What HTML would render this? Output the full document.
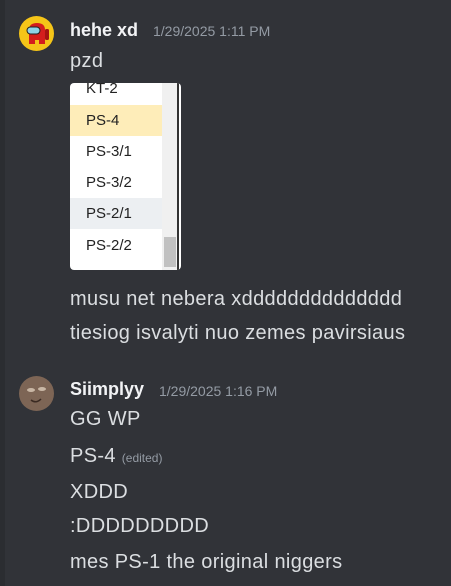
<!DOCTYPE html>
<html><head><style>
body{margin:0;width:451px;height:586px;background:#313338;font-family:"Liberation Sans",sans-serif;color:#dbdee1;position:relative;overflow:hidden}
.a{position:absolute;white-space:nowrap}
.t{font-size:20px;letter-spacing:0.35px;color:#dbdee1}
.n{font-size:18px;font-weight:bold;color:#f2f3f5}
.d{font-size:14px;color:#949ba4}
.img{position:absolute;left:70px;top:83px;width:111px;height:187px;background:#fff;border-radius:4px;overflow:hidden}
.row{position:absolute;left:0;width:92px;height:31px;font-size:15px;color:#222;line-height:31px;padding-left:16px;box-sizing:border-box}
</style></head><body>
<div class="a" style="left:0;top:0;width:5px;height:586px;background:#2b2d31"></div>
<svg class="a" style="left:19px;top:16px" width="35" height="35" viewBox="0 0 35 35">
<circle cx="17.5" cy="17.5" r="17.5" fill="#f5c518"/>
<path d="M10 28 V14 Q10 7 18 7 Q26 7 26 14 V28 H20 V24 H16 V28Z" fill="#d41d1d"/>
<rect x="26" y="13" width="4" height="11" rx="1.5" fill="#a51212"/>
<rect x="8" y="11" width="13" height="7" rx="3.5" fill="#8ed3e8" stroke="#222" stroke-width="1"/>
</svg>
<div class="a n" style="left:70px;top:20px">hehe xd</div>
<div class="a d" style="left:153px;top:23px">1/29/2025 1:11 PM</div>
<div class="a t" style="left:70px;top:50px">pzd</div>
<div class="img">
<div class="row" style="top:-10px">KT-2</div>
<div class="row" style="top:22px;background:#feedb9">PS-4</div>
<div class="row" style="top:53px">PS-3/1</div>
<div class="row" style="top:84px">PS-3/2</div>
<div class="row" style="top:115px;background:#eceff2">PS-2/1</div>
<div class="row" style="top:147px">PS-2/2</div>
<div class="a" style="left:92px;top:0;width:15px;height:187px;background:#f0f0f0"></div>
<div class="a" style="left:94px;top:154px;width:12px;height:30px;background:#c1c1c1"></div>
<div class="a" style="left:107px;top:0;width:2px;height:187px;background:#333"></div>
</div>
<div class="a t" style="left:70px;top:288px">musu net nebera xdddddddddddddd</div>
<div class="a t" style="left:70px;top:322px">tiesiog isvalyti nuo zemes pavirsiaus</div>
<svg class="a" style="left:19px;top:376px" width="35" height="35" viewBox="0 0 35 35">
<circle cx="17.5" cy="17.5" r="17.5" fill="#7d6555"/>
<ellipse cx="12" cy="14" rx="4" ry="2" fill="#c9b7a5"/>
<ellipse cx="23" cy="13" rx="4" ry="2" fill="#c9b7a5"/>
<path d="M12 24 Q17 28 22 23" stroke="#3a2a22" stroke-width="1.5" fill="none"/>
</svg>
<div class="a n" style="left:70px;top:379px">Siimplyy</div>
<div class="a d" style="left:159px;top:383px">1/29/2025 1:16 PM</div>
<div class="a t" style="left:70px;top:408px">GG WP</div>
<div class="a t" style="left:70px;top:445px">PS-4 <span style="font-size:12px;letter-spacing:0;color:#949ba4">(edited)</span></div>
<div class="a t" style="left:70px;top:481px">XDDD</div>
<div class="a t" style="left:70px;top:515px">:DDDDDDDDD</div>
<div class="a t" style="left:70px;top:551px">mes PS-1 the original niggers</div>
</body></html>
